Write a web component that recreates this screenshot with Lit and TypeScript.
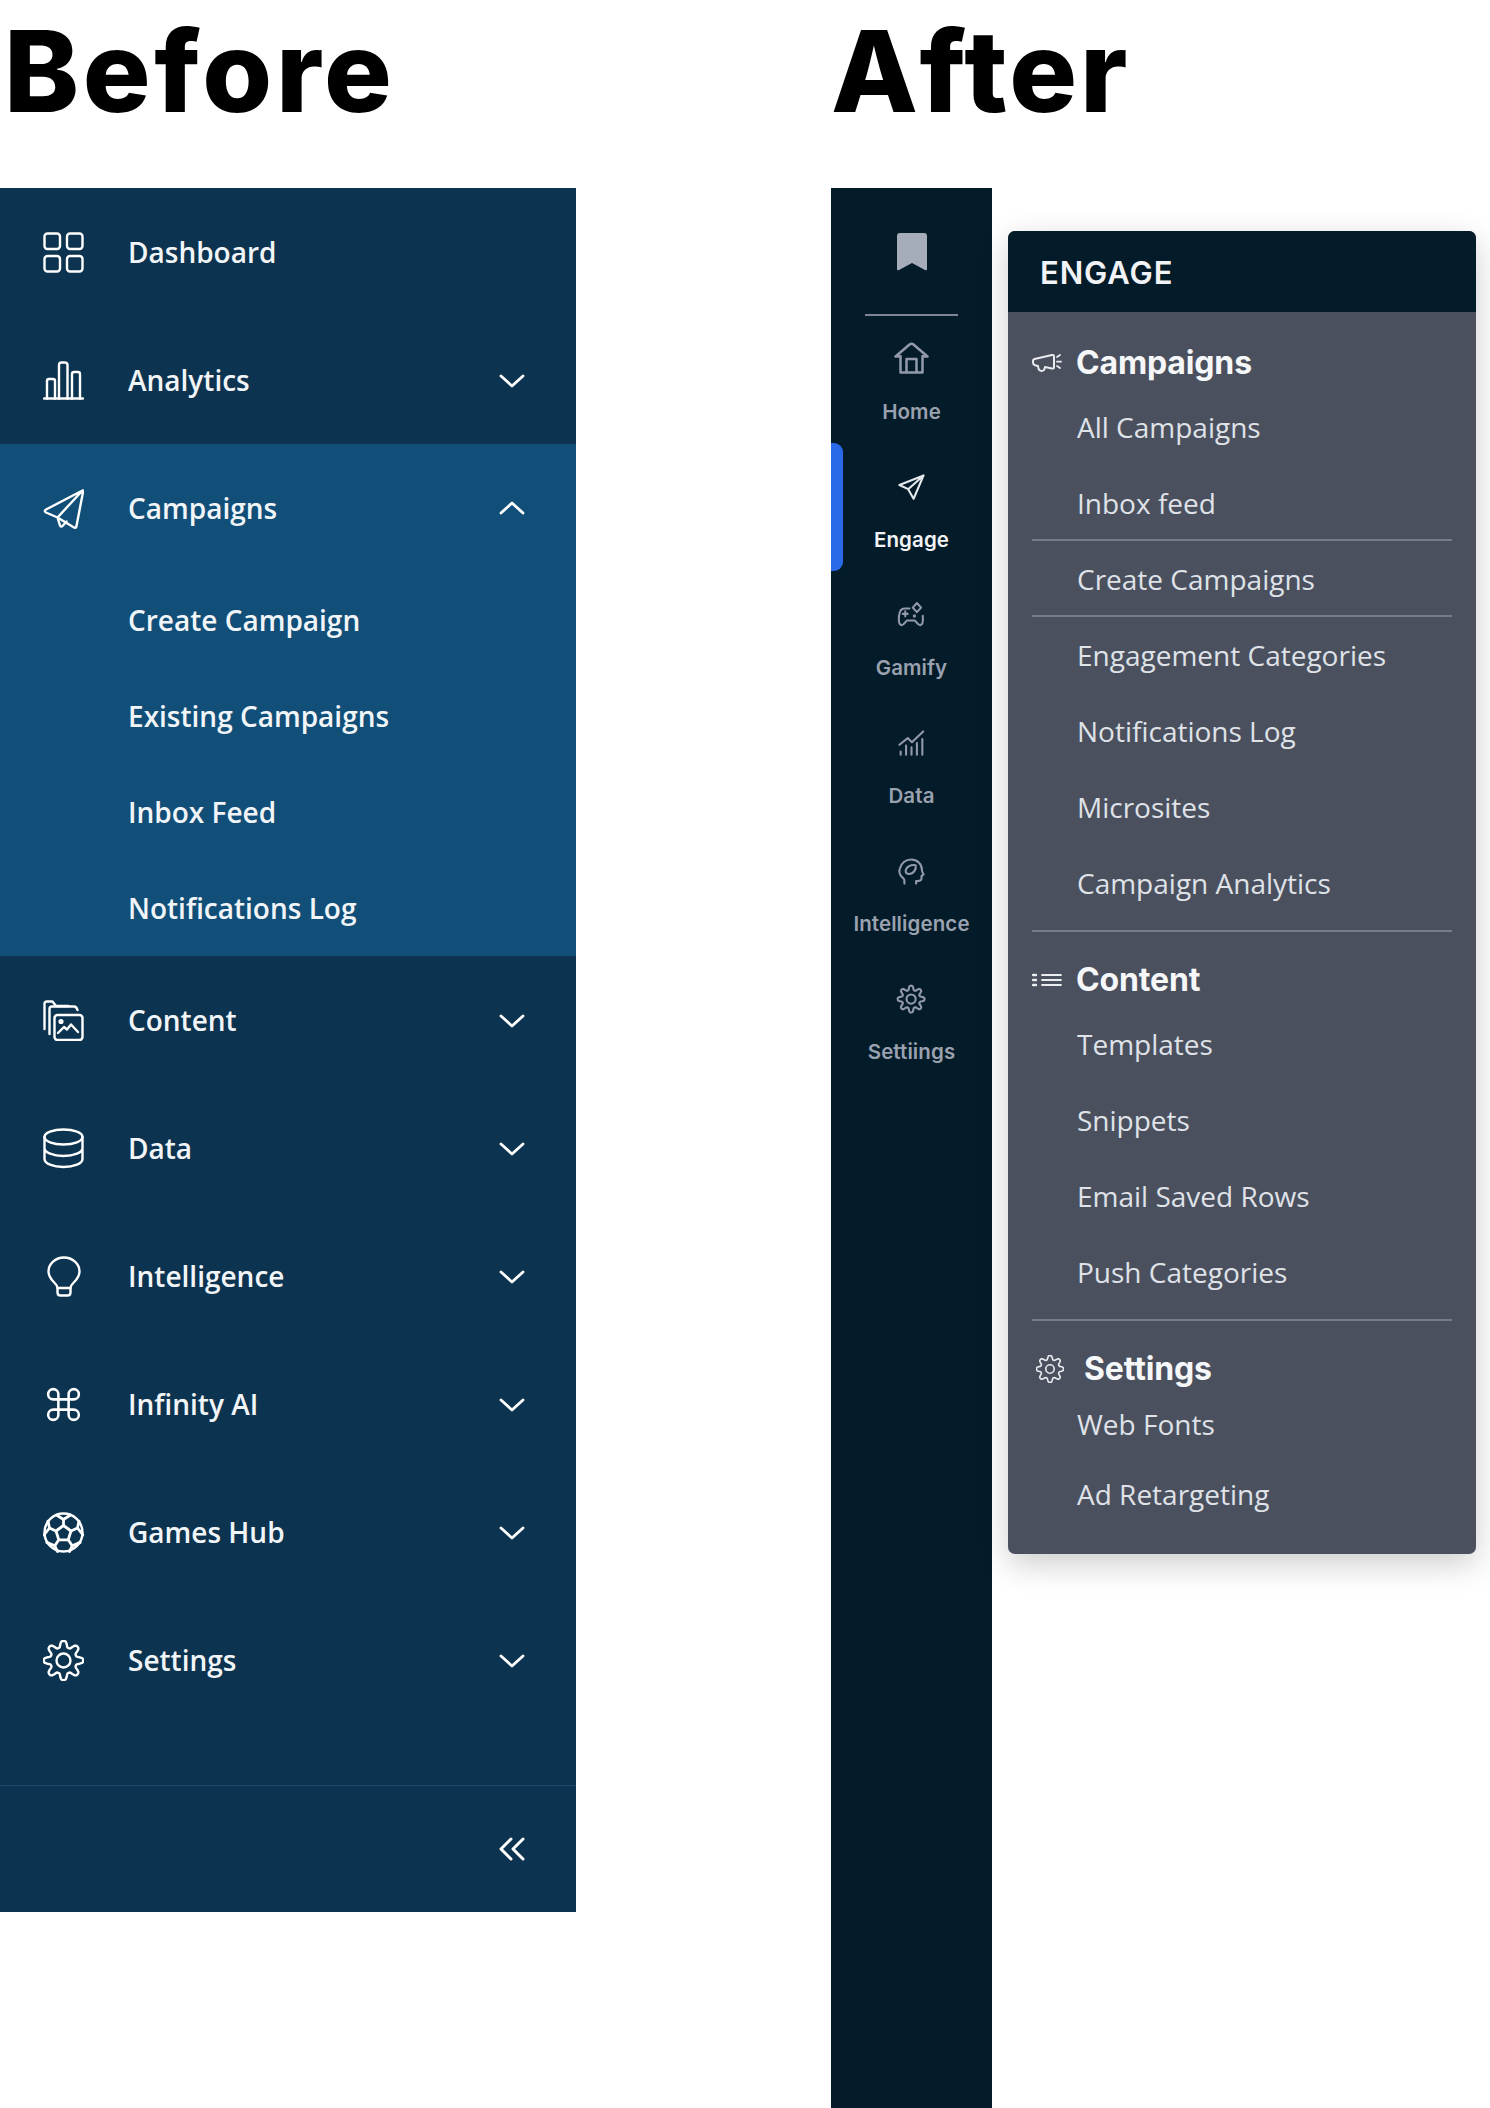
import { LitElement, html, css, svg } from "lit";
import { customElement } from "lit/decorators.js";

const gearPath = (c: number, R: number, A: number) => {
  const pts: string[] = [];
  const N = 96;
  for (let i = 0; i < N; i++) {
    const t = (i / N) * Math.PI * 2;
    const r = R + (A * Math.tanh(1.6 * Math.cos(8 * t))) / Math.tanh(1.6);
    pts.push(`${(c + r * Math.cos(t)).toFixed(2)} ${(c + r * Math.sin(t)).toFixed(2)}`);
  }
  return "M" + pts.join("L") + "Z";
};

const ball = svg`
  <circle cx="20.5" cy="20.5" r="19"/>
  <path d="M20.500 13.500l7.500 5.500-2.800 8.800h-9.400L13 19z" stroke-width="2.800"/>
  <path d="M20.500 13.500V7.500M28 19l6.500-3M25.200 27.800l4 6M15.800 27.800l-4 6M13 19l-6.500-3" stroke-width="2.800"/>
  <path d="M13.500 3L20.500 7.500l7-4.500M34.500 16l1.500-7M34.500 16l5.500 7M29.200 33.800l8-3.400M29.200 33.800L26.500 39.500M11.800 33.800L14.500 39.500M11.800 33.800l-8-3.400M6.500 16l-5.500 7M6.500 16L5 9" stroke-width="2.800"/>
`;

const bigIcons: Record<string, unknown> = {
  dashboard: svg`<rect x="1.500" y="1.500" width="15.500" height="15.500" rx="3"/><rect x="24" y="1.500" width="15.500" height="15.500" rx="3"/><rect x="1.500" y="24" width="15.500" height="15.500" rx="3"/><rect x="24" y="24" width="15.500" height="15.500" rx="3"/>`,
  analytics: svg`<path d="M1 38.500h39"/><path d="M4 38.500V21q0-2 2-2h4q2 0 2 2v17.500M16 38.500V5q0-2.500 2.500-2.500h3Q24.500 2.500 24.500 5v33.500M29 38.500V14q0-2 2-2h4q2 0 2 2v24.500"/>`,
  plane: svg`<path d="M39.500 2.500L3 21.500q-2.500 1.500 0 3L14.500 29.500 31 39.500q2 1 2.500-1.500L40 4q.3-2-.5-1.500zM39.500 2.500L14.500 29.500 17 37.500q1 2 2.500.5l4-4.500"/>`,
  content: svg`<path d="M1.500 29V4q0-2.500 2.500-2.500h5.500L13 6h12.500"/><path d="M6.500 34V9q0-2.500 2.500-2.500h22q2.500 0 3.500 3.500"/><rect x="11.500" y="15" width="28" height="25" rx="3"/><circle cx="18" cy="21.500" r="1.400"/><path d="M15 33l6-6 3 2.500 4-5 7 7.500"/>`,
  data: svg`<ellipse cx="20.500" cy="9" rx="19" ry="7.500"/><path d="M1.500 9v22c0 4.500 8.500 8 19 8s19-3.500 19-8V9M1.500 20c0 4.500 8.500 8 19 8s19-3.500 19-8"/>`,
  bulb: svg`<path d="M14.500 32C14.500 27 5.500 24.500 5.500 15.500a15.500 14 0 0 1 31 0C36.500 24.500 27.500 27 27.500 32z"/><path d="M14.500 32v4.500q0 3 3 3h7q3 0 3-3V32"/>`,
  ai: svg`<g transform="scale(1.7083)"><path d="M15 6v12a3 3 0 1 0 3-3H6a3 3 0 1 0 3 3V6a3 3 0 1 0-3 3h12a3 3 0 1 0-3-3" stroke-width="1.500"/></g>`,
  ball,
  gear: svg`<path d="${gearPath(20.5, 16.5, 3.2)}"/><circle cx="20.500" cy="20.500" r="7"/>`,
};

const railIcons: Record<string, unknown> = {
  home: svg`<path d="M1.500 14.500L15.500 2.500q2-1.500 4 0l14 12M1.500 14.500h4M33.500 14.500h-4M6.500 14v16.500h22V14M12.500 30V17h10v13"/>`,
  engage: svg`<path d="M32 3L3 14.500l10.500 5L20 31zM32 3L13.500 19.500"/>`,
  gamify: svg`<path d="M15 9H9c-4 0-6 4-6.500 9S2 28 5 29c3 1 5-4 7-5.500h9.500c2 1.500 4 6.500 7 5.500 3-1 3-6 2.500-11"/><path d="M7 15.500h6M10 12.500v6"/><circle cx="21" cy="18" r=".8"/><path d="M24 2.500l5 5.500-5 5.500-5-5.500z"/>`,
  chart: svg`<path d="M3 19L13 11l5 5L31.500 3"/><path d="M4.500 31v-4M11 31V20M17.500 31V22M24 31V17M30.500 31V12"/>`,
  brain: svg`<path d="M9 32v-3.500c0-2-1.500-3-3-4.500C3 21 2.500 17 3.500 14 5 7.500 10.500 3 17 3c7.500 0 13 5.500 13 12.500 0 2.500 1 3.500 2 5.500l-2.500 2v3c0 2-2 3-5 3H23v3"/><path d="M10.500 17c0-5 6-8 12-7 1 5-2.500 10.500-8 10.500-2 0-4-1-4-3.500z"/>`,
  gear: svg`<path d="${gearPath(17, 13.5, 2.6)}"/><circle cx="17" cy="17" r="5.500"/>`,
};

const secIcons: Record<string, unknown> = {
  mega: svg`<path d="M2.500 6L20 2q2-.5 2 1.500V14q0 2-2 1.500L13 14q-.5 4-3.500 4T6 13l-3-.8Q1 11.500 1 9.500V8q0-1.500 1.500-2z" stroke-width="2"/><path d="M25 4l3-2M25 8.700h4M25 13l3 2" stroke-width="1.800"/>`,
  list: svg`<path d="M10 5h19M10 10h19M10 15h19" stroke-width="1.800"/><path d="M1 5h3M1 10h3M1 15h3" stroke-width="2.400"/>`,
  gear: svg`<path d="${gearPath(14, 11.5, 2)}"/><circle cx="14" cy="14" r="4.200"/>`,
};

type Item = { label: string; icon: string; open?: boolean; noChevron?: boolean; sub?: string[] };

const beforeItems: Item[] = [
  { label: "Dashboard", icon: "dashboard", noChevron: true },
  { label: "Analytics", icon: "analytics" },
  { label: "Campaigns", icon: "plane", open: true, sub: ["Create Campaign", "Existing Campaigns", "Inbox Feed", "Notifications Log"] },
  { label: "Content", icon: "content" },
  { label: "Data", icon: "data" },
  { label: "Intelligence", icon: "bulb" },
  { label: "Infinity AI", icon: "ai" },
  { label: "Games Hub", icon: "ball" },
  { label: "Settings", icon: "gear" },
];

const railItems = [
  { label: "Home", icon: "home", vb: "0 0 35 35" },
  { label: "Engage", icon: "engage", active: true },
  { label: "Gamify", icon: "gamify" },
  { label: "Data", icon: "chart" },
  { label: "Intelligence", icon: "brain" },
  { label: "Settiings", icon: "gear" },
];

type Row =
  | { k: "head"; label: string; icon: string; cls?: string }
  | { k: "item"; label: string; cls?: string }
  | { k: "div"; cls?: string };

const rows: Row[] = [
  { k: "head", label: "Campaigns", icon: "mega" },
  { k: "item", label: "All Campaigns" },
  { k: "item", label: "Inbox feed" },
  { k: "div", cls: "tight" },
  { k: "item", label: "Create Campaigns" },
  { k: "div", cls: "tight" },
  { k: "item", label: "Engagement Categories" },
  { k: "item", label: "Notifications Log" },
  { k: "item", label: "Microsites" },
  { k: "item", label: "Campaign Analytics" },
  { k: "div", cls: "sec" },
  { k: "head", label: "Content", icon: "list" },
  { k: "item", label: "Templates" },
  { k: "item", label: "Snippets" },
  { k: "item", label: "Email Saved Rows" },
  { k: "item", label: "Push Categories" },
  { k: "div", cls: "sec" },
  { k: "head", label: "Settings", icon: "gear", cls: "settings" },
  { k: "item", label: "Web Fonts", cls: "first" },
  { k: "item", label: "Ad Retargeting" },
];

@customElement("app-root")
export class AppRoot extends LitElement {
  static styles = css`
    :host {
      display: block;
      width: 1490px;
      height: 2108px;
      overflow: hidden;
      background: #fff;
      color: #000;
      font-family: "Open Sans", sans-serif;
    }
    .page { display: flex; height: 2108px; }
    .col-before { width: 831px; flex: none; }
    .col-after { flex: 1; min-width: 0; }
    .title {
      height: 188px;
      box-sizing: border-box;
      padding-top: 6px;
      margin: 0;
      font: 800 113px/130px Inter, sans-serif;
      letter-spacing: 3.7px;
      color: #000;
    }
    .col-before .title { padding-left: 4px; }
    .col-after .title { letter-spacing: 3px; }

    .panel { width: 576px; height: 1724px; background: #0c334f; display: flex; flex-direction: column; }
    .menu { flex: 1; }
    .group.open { background: #114f78; }
    .row { height: 128px; display: flex; align-items: center; padding-left: 43px; padding-right: 49px; color: #fff; }
    .row svg.ic { width: 41px; height: 41px; flex: none; fill: none; stroke: #fff; stroke-width: 2.4; stroke-linecap: round; stroke-linejoin: round; }
    .row .lbl { margin-left: 44px; flex: 1; padding-bottom: 1px; font: 600 28px/40px "Open Sans", sans-serif; color: #f2f5f8; }
    .chev { width: 30px; height: 30px; flex: none; fill: none; stroke: #fff; stroke-width: 2.8; stroke-linecap: round; stroke-linejoin: round; }
    .subrow { height: 96px; display: flex; align-items: center; padding: 0 0 1px 128px; box-sizing: border-box; font: 600 28px/40px "Open Sans", sans-serif; color: #f2f5f8; }
    .foot { height: 127px; flex: none; border-top: 1px solid #1c4a6c; display: flex; align-items: center; justify-content: flex-end; padding-right: 49px; box-sizing: border-box; }
    .foot .chev { stroke-width: 3; }

    .wrap { display: flex; align-items: flex-start; height: 1920px; }
    .rail { width: 161px; height: 1920px; background: #041b29; flex: none; display: flex; flex-direction: column; align-items: stretch; }
    .mark { height: 127px; display: flex; align-items: center; justify-content: center; }
    .mark svg { width: 30px; height: 38px; fill: #a6adba; }
    .rule { height: 2px; margin: -1px 34px -1px; background: #7e8694; }
    .nav { height: 128px; position: relative; display: flex; flex-direction: column; align-items: center; padding-top: 27px; box-sizing: border-box; color: #9aa1af; }
    .nav svg { width: 35px; height: 35px; fill: none; stroke: #929aaa; stroke-width: 2.5; stroke-linecap: round; stroke-linejoin: round; }
    .nav .t { margin-top: 21px; font: 600 20.5px/28px Inter, sans-serif; letter-spacing: 0.1px; white-space: nowrap; }
    .nav.active { color: #f1f3f6; }
    .nav.active svg { stroke: #e6e9ee; }
    .nav.active::before { content: ""; position: absolute; left: 0; top: 0; bottom: 0; width: 12px; background: #2a6ae9; border-radius: 0 9px 9px 0; }

    .pop { width: 468px; margin: 43px 0 0 16px; height: 1323px; background: #4b505f; border-radius: 7px; box-shadow: 0 10px 32px rgba(0,0,0,.2); overflow: hidden; flex: none; }
    .pop-h { height: 81px; background: #041b29; display: flex; align-items: center; padding: 2px 0 0 32px; box-sizing: border-box; font: 600 31px/40px Inter, sans-serif; letter-spacing: .9px; color: #f1f3f6; }
    .pop-b { padding: 28px 24px 0; }
    .head { height: 46px; margin-bottom: 3px; display: flex; align-items: center; font: 700 32px/40px Inter, sans-serif; letter-spacing: -.15px; color: #f6f7f9; }
    .head svg { width: 30px; height: 20px; flex: none; fill: none; stroke: #e9ebef; stroke-width: 1.6; stroke-linecap: round; stroke-linejoin: round; margin-right: 14px; }
    .head.settings { margin-top: 2px; margin-bottom: 0; }
    .head.settings svg { width: 28px; height: 28px; margin: 0 20px 0 4px; }
    .item { height: 76px; display: flex; align-items: center; padding-left: 45px; font: 400 28px/40px "Open Sans", sans-serif; color: #dfe2e7; white-space: nowrap; }
    .item.first { height: 64px; }
    .hr { height: 2px; background: #767c8b; width: 420px; }
    .hr.tight { margin: -2px 0 0; position: relative; }
    .hr.sec { margin: 9px 0 25px; }
  `;

  private chevron(up = false) {
    return html`<svg class="chev" viewBox="0 0 30 30"><path d=${up ? "M4 20l11-10 11 10" : "M4 11l11 10 11-10"}/></svg>`;
  }

  render() {
    return html`
      <div class="page">
        <section class="col-before">
          <h1 class="title">Before</h1>
          <nav class="panel">
            <div class="menu">
              ${beforeItems.map(
                (it) => html`<div class="group ${it.open ? "open" : ""}">
                  <div class="row">
                    <svg class="ic" viewBox="0 0 41 41">${bigIcons[it.icon]}</svg>
                    <span class="lbl">${it.label}</span>
                    ${it.noChevron ? "" : this.chevron(it.open)}
                  </div>
                  ${(it.sub ?? []).map((s) => html`<div class="subrow">${s}</div>`)}
                </div>`
              )}
            </div>
            <div class="foot">
              <svg class="chev" viewBox="0 0 30 30"><path d="M14 5l-10 10 10 10M26 5l-10 10 10 10"/></svg>
            </div>
          </nav>
        </section>
        <section class="col-after">
          <h1 class="title">After</h1>
          <div class="wrap">
            <div class="rail">
              <div class="mark"><svg viewBox="0 0 30 38"><path d="M3 0h24q3 0 3 3v33q0 2-2 1L15 30 2 37q-2 1-2-1V3q0-3 3-3z"/></svg></div>
              <div class="rule"></div>
              ${railItems.map(
                (r) => html`<div class="nav ${r.active ? "active" : ""}">
                  <svg viewBox=${r.vb ?? "-3.5 -3.5 42 42"}>${railIcons[r.icon]}</svg>
                  <span class="t">${r.label}</span>
                </div>`
              )}
            </div>
            <aside class="pop">
              <div class="pop-h">ENGAGE</div>
              <div class="pop-b">
                ${rows.map((r) => {
                  if (r.k === "head")
                    return html`<div class="head ${r.cls ?? ""}">
                      <svg viewBox=${r.icon === "gear" ? "0 0 28 28" : "0 0 30 20"}>${secIcons[r.icon]}</svg>${r.label}
                    </div>`;
                  if (r.k === "item") return html`<div class="item ${r.cls ?? ""}">${r.label}</div>`;
                  return html`<div class="hr ${r.cls ?? ""}"></div>`;
                })}
              </div>
            </aside>
          </div>
        </section>
      </div>
    `;
  }
}
